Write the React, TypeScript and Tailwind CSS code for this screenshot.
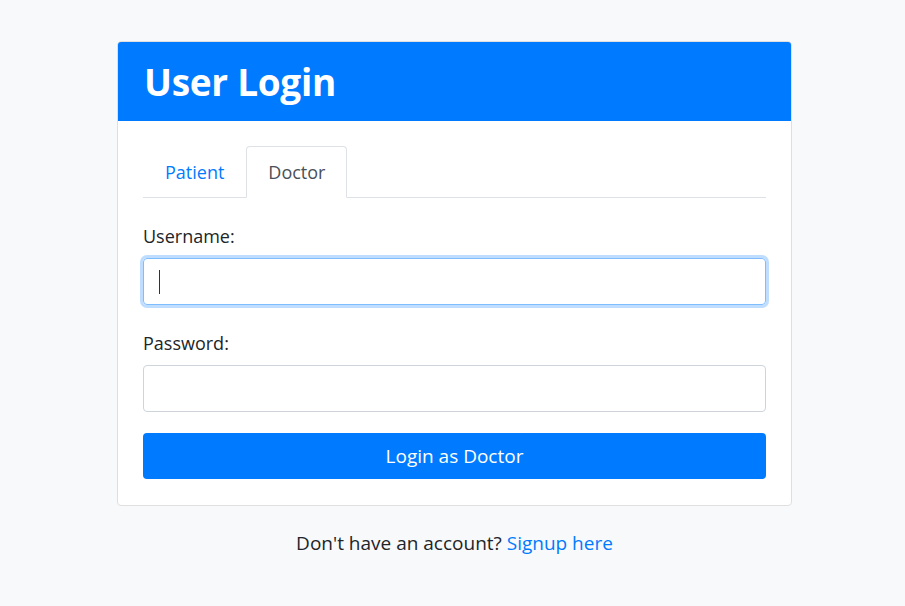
import { useState } from 'react';

export default function App() {
  const [tab, setTab] = useState<'patient' | 'doctor'>('doctor');

  return (
    <div
      className="min-h-[606px] bg-[#f8f9fa] pt-[41px] pl-[4px] flex flex-col items-center text-[#212529]"
      style={{ fontFamily: '"Open Sans", "Noto Sans", sans-serif' }}
    >
      <div className="w-[675px] bg-white border border-[#dfdfdf] rounded-[4px] overflow-hidden">
        <div className="bg-[#007bff] h-[79px] px-[26px] flex items-center">
          <h1 className="text-white text-[37px] font-bold leading-none tracking-[-0.3px]">User Login</h1>
        </div>

        <div className="px-[25px] pt-[25px] pb-[26px]">
          <nav className="flex border-b border-[#dee2e6]">
            <button
              onClick={() => setTab('patient')}
              className={
                tab === 'patient'
                  ? 'px-[21px] h-[52px] -mb-px border border-[#dee2e6] border-b-white rounded-t-[4px] bg-white text-[#495057] text-[18px]'
                  : 'px-[21px] h-[52px] -mb-px border border-transparent text-[#007bff] text-[18px]'
              }
            >
              Patient
            </button>
            <button
              onClick={() => setTab('doctor')}
              className={
                tab === 'doctor'
                  ? 'px-[21px] h-[52px] -mb-px border border-[#dee2e6] border-b-white rounded-t-[4px] bg-white text-[#495057] text-[18px]'
                  : 'px-[21px] h-[52px] -mb-px border border-transparent text-[#007bff] text-[18px]'
              }
            >
              Doctor
            </button>
          </nav>

          <form className="mt-[25px]" onSubmit={(e) => e.preventDefault()}>
            <label className="block text-[18px] leading-[27px] mb-[8px]">Username:</label>
            <div className="relative">
              <input
                type="text"
                className="block w-full h-[47px] rounded-[4px] border border-[#80bdff] shadow-[0_0_0_3px_rgba(0,123,255,0.25)] px-[16px] text-[18px] outline-none"
              />
              <span className="absolute left-[16px] top-[12px] w-px h-[24px] bg-[#333]" />
            </div>

            <label className="block text-[18px] leading-[27px] mb-[8px] mt-[25px]">Password:</label>
            <input
              type="password"
              className="block w-full h-[47px] rounded-[4px] border border-[#ced4da] px-[16px] text-[18px] outline-none"
            />

            <button
              type="submit"
              className="mt-[21px] w-full h-[46px] rounded-[4px] bg-[#007bff] text-white text-[19px]"
            >
              Login as {tab === 'doctor' ? 'Doctor' : 'Patient'}
            </button>
          </form>
        </div>
      </div>

      <p className="mt-[22px] text-[19px] leading-[30px]">
        Don't have an account? <a href="#" className="text-[#007bff]">Signup here</a>
      </p>
    </div>
  );
}
